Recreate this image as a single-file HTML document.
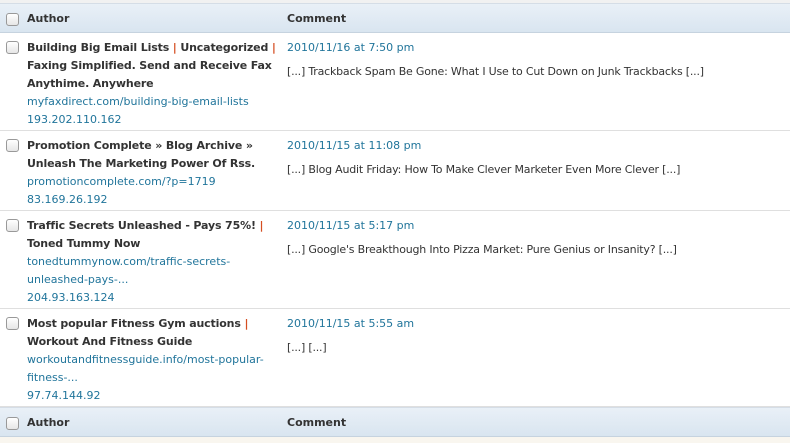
<!DOCTYPE html>
<html><head><style>
body{margin:0;width:790px;height:443px;background:#f9f6ef;font-family:"DejaVu Sans","Liberation Sans",sans-serif;font-size:11px;color:#333;overflow:hidden;position:relative}
.top{position:absolute;left:0;top:0;width:790px;height:3px;background:#f1f1f1}
.hd{position:absolute;left:0;width:790px;height:30px;background:linear-gradient(#e9f0f7,#d9e5f0);border-top:1px solid #d5dde6;border-bottom:1px solid #c6d3df;box-sizing:border-box}
.hd b{position:absolute;top:8px;font-size:11px;color:#333}
.row{position:absolute;left:0;width:790px;background:#fff;border-bottom:1px solid #dfdfdf;box-sizing:border-box}
.cb{position:absolute;left:6px;width:11px;height:11px;border:1px solid #999;border-radius:3px;background:linear-gradient(#fff,#e6e6e6)}
.a{position:absolute;left:27px;top:6px;width:255px;line-height:18px}
.a b{font-weight:bold;letter-spacing:-0.15px}
.p{color:#d54e21}
.l{color:#21759b}
.c{position:absolute;left:287px;top:6px;line-height:18px;color:#21759b}
.c div+div{margin-top:6px;color:#333;letter-spacing:-0.2px}
</style></head><body>
<div class="top"></div>
<div class="hd" style="top:3px"><div class="cb" style="top:9px"></div><b style="left:27px">Author</b><b style="left:287px">Comment</b></div>
<div class="row" style="top:33px;height:98px"><div class="cb" style="top:8px"></div>
<div class="a"><b>Building Big Email Lists <span class="p">|</span> Uncategorized <span class="p">|</span><br>Faxing Simplified. Send and Receive Fax<br>Anythime. Anywhere</b><br><span class="l">myfaxdirect.com/building-big-email-lists</span><br><span class="l">193.202.110.162</span></div>
<div class="c"><div>2010/11/16 at 7:50 pm</div><div>[...] Trackback Spam Be Gone: What I Use to Cut Down on Junk Trackbacks [...]</div></div></div>
<div class="row" style="top:131px;height:80px"><div class="cb" style="top:8px"></div>
<div class="a"><b>Promotion Complete » Blog Archive »<br>Unleash The Marketing Power Of Rss.</b><br><span class="l">promotioncomplete.com/?p=1719</span><br><span class="l">83.169.26.192</span></div>
<div class="c"><div>2010/11/15 at 11:08 pm</div><div>[...] Blog Audit Friday: How To Make Clever Marketer Even More Clever [...]</div></div></div>
<div class="row" style="top:211px;height:98px"><div class="cb" style="top:8px"></div>
<div class="a"><b>Traffic Secrets Unleashed - Pays 75%! <span class="p">|</span><br>Toned Tummy Now</b><br><span class="l">tonedtummynow.com/traffic-secrets-<br>unleashed-pays-...</span><br><span class="l">204.93.163.124</span></div>
<div class="c"><div>2010/11/15 at 5:17 pm</div><div>[...] Google's Breakthough Into Pizza Market: Pure Genius or Insanity? [...]</div></div></div>
<div class="row" style="top:309px;height:98px"><div class="cb" style="top:8px"></div>
<div class="a"><b>Most popular Fitness Gym auctions <span class="p">|</span><br>Workout And Fitness Guide</b><br><span class="l">workoutandfitnessguide.info/most-popular-<br>fitness-...</span><br><span class="l">97.74.144.92</span></div>
<div class="c"><div>2010/11/15 at 5:55 am</div><div>[...] [...]</div></div></div>
<div class="hd" style="top:407px"><div class="cb" style="top:9px"></div><b style="left:27px">Author</b><b style="left:287px">Comment</b></div>
</body></html>
